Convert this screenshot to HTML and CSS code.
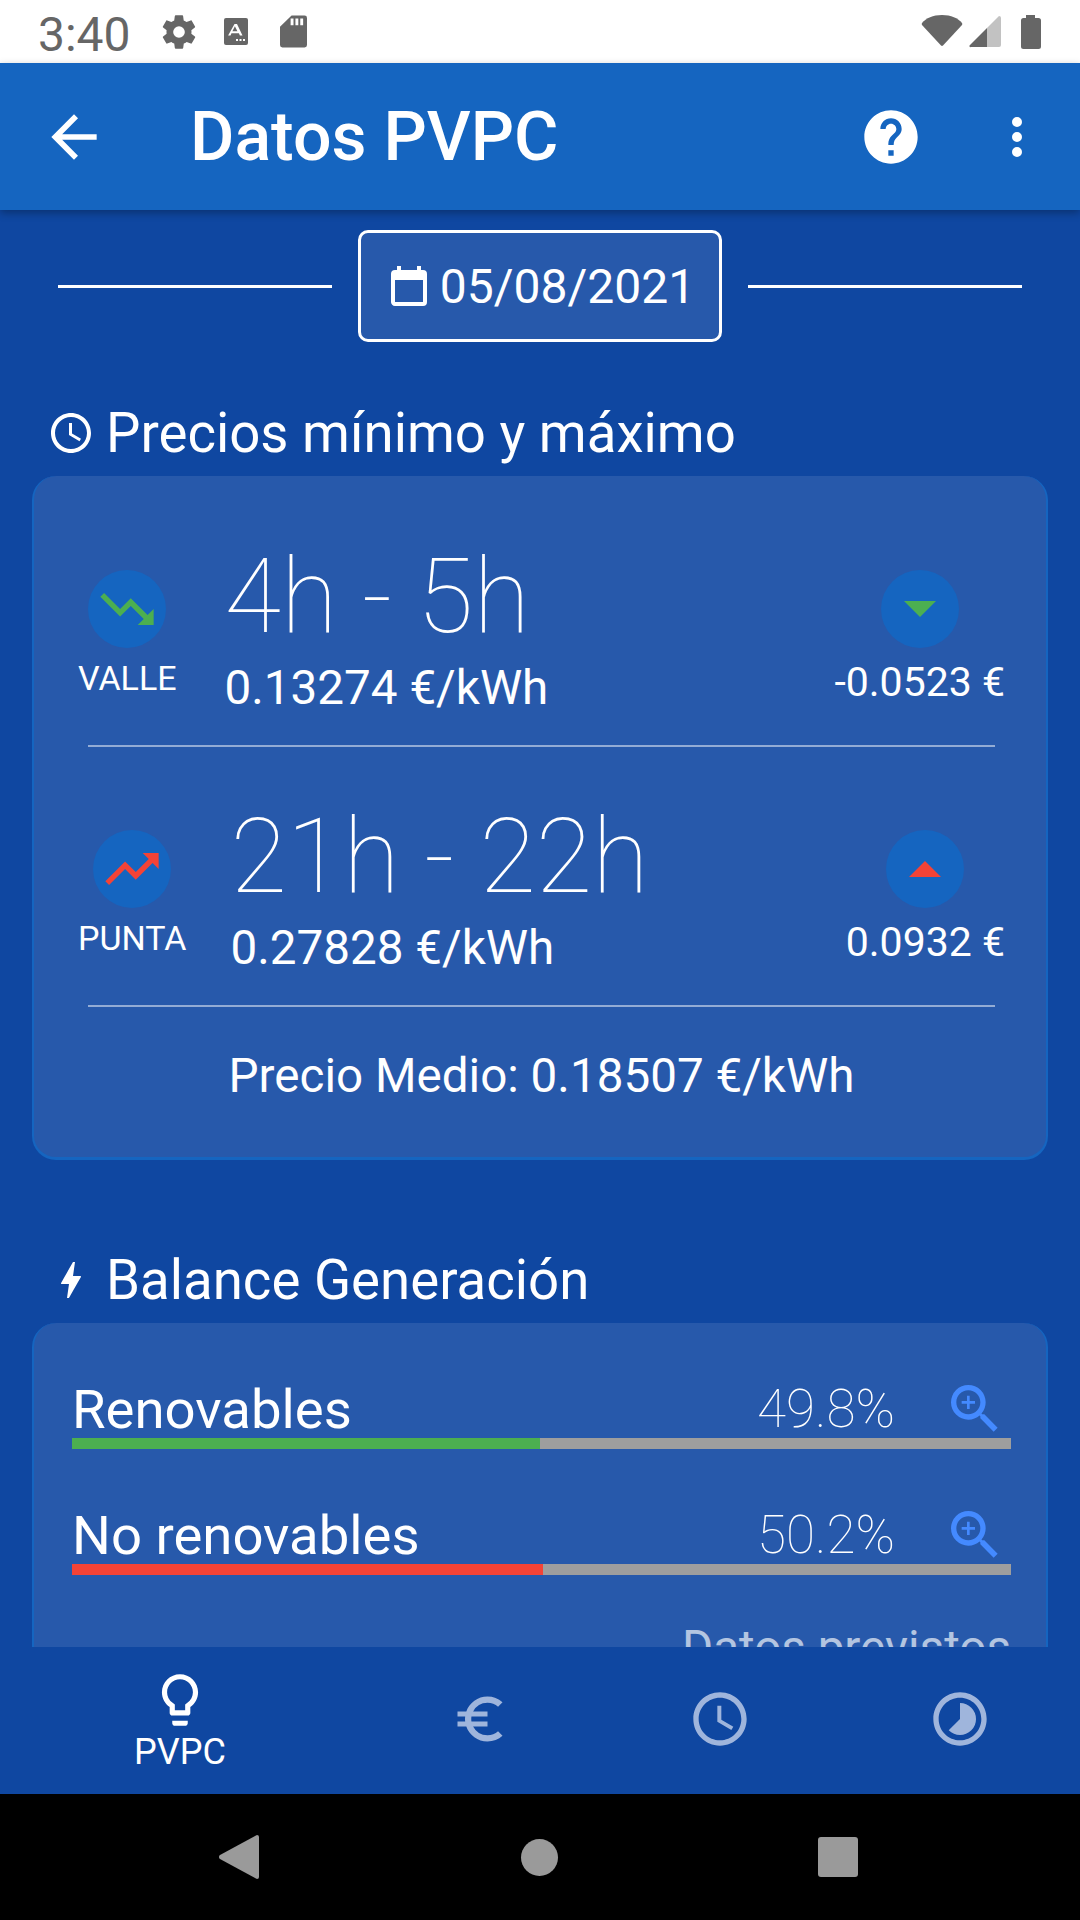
FILE: index.html
```html
<!DOCTYPE html>
<html lang="es">
<head>
    <meta charset="UTF-8">
    <meta name="viewport" content="width=device-width, initial-scale=1.0">
    <title>Datos PVPC</title>
    <link rel="stylesheet" href="styles.css">
</head>
<body>
    <div class="status-bar">
        <span class="status-time">3:40</span>
        <svg class="status-gear" width="40" height="40" viewBox="0 0 24 24"><path fill="#666" d="M19.4 13c.04-.3.1-.66.1-1s-.03-.7-.1-1l2.1-1.65c.2-.15.25-.42.13-.64l-2-3.46c-.12-.22-.4-.3-.6-.22l-2.5 1c-.52-.4-1.08-.73-1.7-.98l-.37-2.65A.49.49 0 0 0 14 2h-4c-.25 0-.46.18-.5.42l-.37 2.65c-.62.25-1.18.59-1.7.98l-2.5-1c-.22-.08-.48 0-.6.22l-2 3.46c-.13.22-.07.49.12.64L4.57 11c-.04.32-.07.65-.07 1s.03.68.07 1l-2.11 1.65c-.19.15-.25.42-.12.64l2 3.46c.12.22.4.3.6.22l2.5-1c.52.4 1.08.73 1.7.98l.37 2.65c.04.24.25.42.5.42h4c.25 0 .46-.18.5-.42l.37-2.65c.62-.25 1.18-.59 1.7-.98l2.5 1c.22.08.48 0 .6-.22l2-3.46c.12-.22.07-.49-.12-.64zM12 15.5a3.5 3.5 0 1 1 0-7 3.5 3.5 0 0 1 0 7z"/></svg>
        <svg class="status-a" width="24" height="27" viewBox="0 0 24 27"><rect width="24" height="27" rx="2" fill="#666"/><path fill="#fff" d="M6.500 17.500h-2.400L10.500 6h2.500l5.500 11.500h-2.600l-1-2.300H7.500zm1.900-4.200h5l-2.500-5zM12 21h2v2h-2zM15.500 21h2v2h-2zM19 21h2v2h-2z"/></svg>
        <svg class="status-sd" width="27" height="33" viewBox="0 0 28 33"><path fill="#666" d="M12 0h13.500a2.500 2.500 0 0 1 2.500 2.500v28a2.500 2.500 0 0 1-2.500 2.500h-23A2.500 2.500 0 0 1 0 30.500V11.500zM11 3v7h3V3zM16 3v7h3V3zM21 3v7h3V3z" fill-rule="evenodd"/></svg>
        <span class="status-spacer"></span>
        <svg class="status-wifi" width="42" height="33" viewBox="0 0 42 33"><path fill="#666" d="M1 9C5 4 12 1 21 1s16 3 20 8a2 2 0 0 1 0 2L22 31.500a1.500 1.500 0 0 1-2 0L1 11a2 2 0 0 1 0-2z"/></svg>
        <svg class="status-signal" width="32" height="33" viewBox="0 0 32 33"><path fill="#c2c2c2" d="M30 1a2 2 0 0 1 2 2v27a2 2 0 0 1-2 2H18V13z"/><path fill="#666" d="M18 13v19H2a1 1 0 0 1-1-2z"/></svg>
        <svg class="status-battery" width="20" height="34" viewBox="0 0 20 34"><path fill="#666" d="M5 0h9v3h3.500A2.500 2.500 0 0 1 20 5.500V31.500a2.500 2.500 0 0 1-2.500 2.500h-15A2.500 2.500 0 0 1 0 31.500V5.500A2.500 2.500 0 0 1 2.500 3H5z"/></svg>
    </div>

    <header class="app-bar">
        <svg class="back-icon" width="68" height="68" viewBox="0 0 24 24"><path fill="#fff" d="M20 11H7.830l5.590-5.590L12 4l-8 8 8 8 1.410-1.410L7.830 13H20z"/></svg>
        <h1>Datos PVPC</h1>
        <svg class="help-icon" width="64" height="64" viewBox="0 0 24 24"><path fill="#fff" d="M12 2C6.480 2 2 6.480 2 12s4.480 10 10 10 10-4.480 10-10S17.520 2 12 2zm1 17h-2v-2h2zm2.070-7.750-.9.920C13.450 12.900 13 13.500 13 15h-2v-.5c0-1.100.45-2.100 1.170-2.830l1.240-1.260c.37-.36.590-.86.590-1.410 0-1.100-.9-2-2-2s-2 .9-2 2H8c0-2.210 1.790-4 4-4s4 1.790 4 4c0 .88-.36 1.680-.93 2.250z"/></svg>
        <svg class="more-icon" width="60" height="60" viewBox="0 0 24 24"><path fill="#fff" d="M12 8a2 2 0 1 0 0-4 2 2 0 0 0 0 4zm0 2a2 2 0 1 0 0 4 2 2 0 0 0 0-4zm0 6a2 2 0 1 0 0 4 2 2 0 0 0 0-4z"/></svg>
    </header>

    <main class="content">
        <div class="date-row">
            <span class="date-line"></span>
            <div class="date-box">
                <svg width="48" height="48" viewBox="0 0 24 24"><path fill="#fff" d="M19 4h-1V2h-2v2H8V2H6v2H5a2 2 0 0 0-2 2v14c0 1.100.9 2 2 2h14a2 2 0 0 0 2-2V6a2 2 0 0 0-2-2zm0 16H5V9h14z"/></svg>
                <span>05/08/2021</span>
            </div>
            <span class="date-line"></span>
        </div>

        <h2 class="section-title">
            <svg width="48" height="48" viewBox="0 0 24 24"><path fill="#fff" d="M11.990 2C6.470 2 2 6.480 2 12s4.470 10 9.990 10C17.520 22 22 17.520 22 12S17.520 2 11.990 2zM12 20c-4.420 0-8-3.580-8-8s3.580-8 8-8 8 3.580 8 8-3.580 8-8 8zm.5-13H11v6l5.250 3.150.75-1.230-4.500-2.670z"/></svg>
            <span>Precios mínimo y máximo</span>
        </h2>

        <section class="card card-prices">
            <div class="price-row">
                <div class="price-side">
                    <span class="round-icon">
                        <svg width="64" height="64" viewBox="0 0 24 24"><path fill="#4caf50" d="M16 18l2.290-2.290-4.880-4.880-4 4L2 7.410 3.410 6l6 6 4-4 6.300 6.290L22 12v6z"/></svg>
                    </span>
                    <span class="side-label">VALLE</span>
                </div>
                <div class="price-main">
                    <div class="hours">4h - 5h</div>
                    <div class="price">0.13274 €/kWh</div>
                </div>
                <div class="price-diff">
                    <span class="round-icon">
                        <svg width="32" height="16" viewBox="0 0 32 16"><path fill="#4caf50" d="M0 0h32L16 16z"/></svg>
                    </span>
                    <span class="diff-value">-0.0523 €</span>
                </div>
            </div>
            <div class="divider"></div>
            <div class="price-row">
                <div class="price-side">
                    <span class="round-icon">
                        <svg width="64" height="64" viewBox="0 0 24 24"><path fill="#f44336" d="M16 6l2.290 2.290-4.880 4.880-4-4L2 16.590 3.410 18l6-6 4 4 6.300-6.290L22 12V6z"/></svg>
                    </span>
                    <span class="side-label">PUNTA</span>
                </div>
                <div class="price-main price-main-punta">
                    <div class="hours">21h - 22h</div>
                    <div class="price">0.27828 €/kWh</div>
                </div>
                <div class="price-diff">
                    <span class="round-icon">
                        <svg width="32" height="16" viewBox="0 0 32 16"><path fill="#f44336" d="M16 0l16 16H0z"/></svg>
                    </span>
                    <span class="diff-value">0.0932 €</span>
                </div>
            </div>
            <div class="divider"></div>
            <div class="average">Precio Medio: 0.18507 €/kWh</div>
        </section>

        <h2 class="section-title section-balance">
            <svg width="48" height="48" viewBox="0 0 24 24"><path fill="#fff" d="M11 21h-1l1-7H7.500c-.58 0-.57-.32-.38-.66.19-.34.050-.08.070-.12C8.480 10.940 10.420 7.540 13 3h1l-1 7h3.500c.49 0 .56.330.47.510l-.070.150C12.960 17.550 11 21 11 21z"/></svg>
            <span>Balance Generación</span>
        </h2>

        <section class="card card-balance">
            <div class="balance-item">
                <div class="balance-head">
                    <span class="balance-name">Renovables</span>
                    <span class="balance-pct">49.8%</span>
                    <svg class="zoom-icon" width="64" height="64" viewBox="0 0 24 24"><path fill="#448aff" d="M15.500 14h-.79l-.28-.27A6.470 6.470 0 0 0 16 9.500 6.500 6.500 0 1 0 9.500 16c1.610 0 3.090-.59 4.230-1.570l.27.28v.79l5 4.990L20.490 19l-4.990-5zm-6 0C7.010 14 5 11.990 5 9.500S7.010 5 9.500 5 14 7.010 14 9.500 11.990 14 9.500 14z"/><path fill="#448aff" d="M12 10h-2v2H9v-2H7V9h2V7h1v2h2v1z"/></svg>
                </div>
                <div class="bar"><div class="bar-fill bar-green" style="width: 49.8%"></div></div>
            </div>
            <div class="balance-item">
                <div class="balance-head">
                    <span class="balance-name">No renovables</span>
                    <span class="balance-pct">50.2%</span>
                    <svg class="zoom-icon" width="64" height="64" viewBox="0 0 24 24"><path fill="#448aff" d="M15.500 14h-.79l-.28-.27A6.470 6.470 0 0 0 16 9.500 6.500 6.500 0 1 0 9.500 16c1.610 0 3.090-.59 4.230-1.570l.27.28v.79l5 4.990L20.490 19l-4.990-5zm-6 0C7.010 14 5 11.990 5 9.500S7.010 5 9.500 5 14 7.010 14 9.500 11.990 14 9.500 14z"/><path fill="#448aff" d="M12 10h-2v2H9v-2H7V9h2V7h1v2h2v1z"/></svg>
                </div>
                <div class="bar"><div class="bar-fill bar-red" style="width: 50.2%"></div></div>
            </div>
            <div class="forecast">Datos previstos</div>
        </section>
    </main>

    <nav class="bottom-nav">
        <div class="nav-item nav-active">
            <svg width="62" height="62" viewBox="0 0 24 24"><path fill="#fff" d="M9 21c0 .55.45 1 1 1h4c.55 0 1-.45 1-1v-1H9v1zm3-19C8.140 2 5 5.140 5 9c0 2.380 1.190 4.470 3 5.740V17c0 .55.45 1 1 1h6c.55 0 1-.45 1-1v-2.260c1.810-1.270 3-3.360 3-5.740 0-3.860-3.140-7-7-7zm2.850 11.100-.85.6V16h-4v-2.300l-.85-.6A4.997 4.997 0 0 1 7 9c0-2.760 2.240-5 5-5s5 2.240 5 5c0 1.630-.8 3.160-2.150 4.100z"/></svg>
            <span>PVPC</span>
        </div>
        <div class="nav-item">
            <svg width="60" height="60" viewBox="0 0 24 24"><path fill="#9fb5dc" d="M15 18.500A6.480 6.480 0 0 1 9.240 15H15v-2H8.580c-.05-.33-.08-.66-.08-1s.03-.67.08-1H15V9H9.240A6.491 6.491 0 0 1 15 5.500c1.610 0 3.090.59 4.230 1.570L21 5.300A8.955 8.955 0 0 0 15 3c-3.920 0-7.240 2.510-8.480 6H3v2h3.060a8.262 8.262 0 0 0 0 2H3v2h3.520c1.240 3.490 4.560 6 8.480 6 2.310 0 4.410-.87 6-2.300l-1.780-1.770c-1.130.98-2.600 1.570-4.220 1.570z"/></svg>
        </div>
        <div class="nav-item">
            <svg width="64" height="64" viewBox="0 0 24 24"><path fill="#9fb5dc" d="M11.990 2C6.470 2 2 6.480 2 12s4.470 10 9.990 10C17.520 22 22 17.520 22 12S17.520 2 11.990 2zM12 20c-4.420 0-8-3.580-8-8s3.580-8 8-8 8 3.580 8 8-3.580 8-8 8zm.5-13H11v6l5.250 3.150.75-1.230-4.500-2.670z"/></svg>
        </div>
        <div class="nav-item">
            <svg width="64" height="64" viewBox="0 0 24 24"><path fill="#9fb5dc" d="M16.240 7.760A5.970 5.970 0 0 0 12 6v6l-4.240 4.240c2.340 2.340 6.140 2.340 8.490 0a5.990 5.990 0 0 0-.01-8.480zM12 2C6.480 2 2 6.480 2 12s4.480 10 10 10 10-4.480 10-10S17.520 2 12 2zm0 18c-4.420 0-8-3.580-8-8s3.580-8 8-8 8 3.580 8 8-3.580 8-8 8z"/></svg>
        </div>
    </nav>

    <div class="system-nav">
        <svg width="40" height="44" viewBox="0 0 40 44"><path fill="#9a9a9a" d="M38 0a2 2 0 0 1 2 2v40a2 2 0 0 1-2 2L1 24a2.500 2.500 0 0 1 0-4z"/></svg>
        <span class="system-home"></span>
        <span class="system-recent"></span>
    </div>
</body>
</html>
```

FILE: styles.css
```css
* {
    box-sizing: border-box;
}
body {
    font-family: Roboto, "Liberation Sans", sans-serif;
    margin: 0;
    padding: 0;
    width: 1080px;
    height: 1920px;
    display: flex;
    flex-direction: column;
    overflow: hidden;
    background-color: #0f47a1;
    color: #fff;
}

/* status bar */
.status-bar {
    height: 63px;
    flex: none;
    display: flex;
    align-items: center;
    padding: 0 39px 0 38px;
    background-color: #fff;
    color: #666;
}
.status-time {
    font-size: 48px;
    margin-top: 6px;
}
.status-gear {
    margin-left: 28px;
}
.status-a {
    margin-left: 25px;
}
.status-sd {
    margin-left: 32px;
}
.status-spacer {
    flex: 1;
}
.status-wifi {
    margin-top: -3px;
}
.status-signal {
    margin-left: 6px;
    margin-top: -1px;
}
.status-battery {
    margin-left: 20px;
}

/* app bar */
.app-bar {
    height: 147px;
    flex: none;
    display: flex;
    align-items: center;
    padding: 0 33px 0 40px;
    background-color: #1565c0;
    box-shadow: 0 3px 8px rgba(0, 0, 0, 0.3);
    position: relative;
}
.app-bar h1 {
    flex: 1;
    margin: 0 0 0 82px;
    font-size: 68px;
    font-weight: 500;
}
.more-icon {
    margin-left: 64px;
}

/* content */
.content {
    flex: 1;
    min-height: 0;
    overflow: hidden;
    padding: 20px 32px 0;
}
.date-row {
    display: flex;
    align-items: center;
    padding: 0 26px;
    gap: 26px;
}
.date-line {
    flex: 1;
    height: 3px;
    background-color: #fff;
}
.date-box {
    width: 364px;
    height: 112px;
    display: flex;
    align-items: center;
    justify-content: center;
    gap: 7px;
    background-color: #2759ab;
    border: 3px solid #fff;
    border-radius: 10px;
    font-size: 48px;
}
.section-title {
    display: flex;
    align-items: center;
    gap: 11px;
    margin: 60px 0 0 15px;
    height: 62px;
    font-size: 54.6px;
    font-weight: 400;
}
.section-balance {
    margin-top: 89px;
}
.card {
    background-color: #2759ab;
    border-radius: 24px;
    border-left: 2px solid #1565c0;
    border-right: 2px solid #1565c0;
    border-bottom: 3px solid #1565c0;
    margin-top: 12px;
}
.card-prices {
    height: 684px;
    padding: 65px 41px 0 44px;
}
.price-row {
    display: flex;
    height: 204px;
}
.price-side {
    display: flex;
    flex-direction: column;
    align-items: center;
    padding-top: 29px;
}
.round-icon {
    width: 78px;
    height: 78px;
    border-radius: 50%;
    background-color: #1565c0;
    display: flex;
    align-items: center;
    justify-content: center;
}
.side-label {
    font-size: 34px;
    margin-top: 10px;
}
.price-main {
    flex: 1;
    margin-left: 48px;
}
.price-main-punta {
    margin-left: 44px;
}
.hours {
    font-size: 103px;
    font-weight: 100;
    line-height: 118px;
    margin-top: -3px;
}
.price {
    font-size: 47.6px;
    line-height: 56px;
    margin-top: 4px;
}
.price-diff {
    display: flex;
    flex-direction: column;
    align-items: center;
    padding-top: 29px;
}
.diff-value {
    font-size: 41px;
    margin-top: 10px;
}
.divider {
    height: 2px;
    margin: 0 10px 54px;
    background-color: rgba(255, 255, 255, 0.5);
}
.average {
    text-align: center;
    font-size: 47.6px;
    margin-top: -13px;
}

/* balance */
.card-balance {
    height: 400px;
    padding: 55px 35px 0 38px;
}
.balance-item {
    margin-bottom: 55px;
}
.balance-head {
    display: flex;
    align-items: center;
    height: 62px;
}
.balance-name {
    flex: 1;
    font-size: 54.5px;
}
.balance-pct {
    font-size: 53px;
    font-weight: 100;
}
.zoom-icon {
    margin-left: 48px;
    margin-right: 4px;
}
.bar {
    height: 11px;
    margin-top: -2px;
    background-color: #9e9e9e;
}
.bar-fill {
    height: 100%;
}
.bar-green {
    background-color: #4caf50;
}
.bar-red {
    background-color: #f44336;
}
.forecast {
    text-align: right;
    font-size: 47.6px;
    opacity: 0.65;
    margin-top: -10px;
}

/* bottom navigation */
.bottom-nav {
    height: 147px;
    flex: none;
    display: flex;
    background-color: #0f47a1;
    position: relative;
}
.nav-item {
    width: 240px;
    display: flex;
    flex-direction: column;
    align-items: center;
    justify-content: center;
    padding-bottom: 4px;
}
.nav-active {
    width: 360px;
    font-size: 36px;
    padding-bottom: 0;
}
.system-nav {
    height: 126px;
    flex: none;
    display: flex;
    align-items: center;
    background-color: #000;
    padding-left: 219px;
}
.system-home {
    width: 37px;
    height: 37px;
    margin-left: 262px;
    border-radius: 50%;
    background-color: #9a9a9a;
}
.system-recent {
    width: 40px;
    height: 40px;
    margin-left: 260px;
    border-radius: 3px;
    background-color: #9a9a9a;
}
```
